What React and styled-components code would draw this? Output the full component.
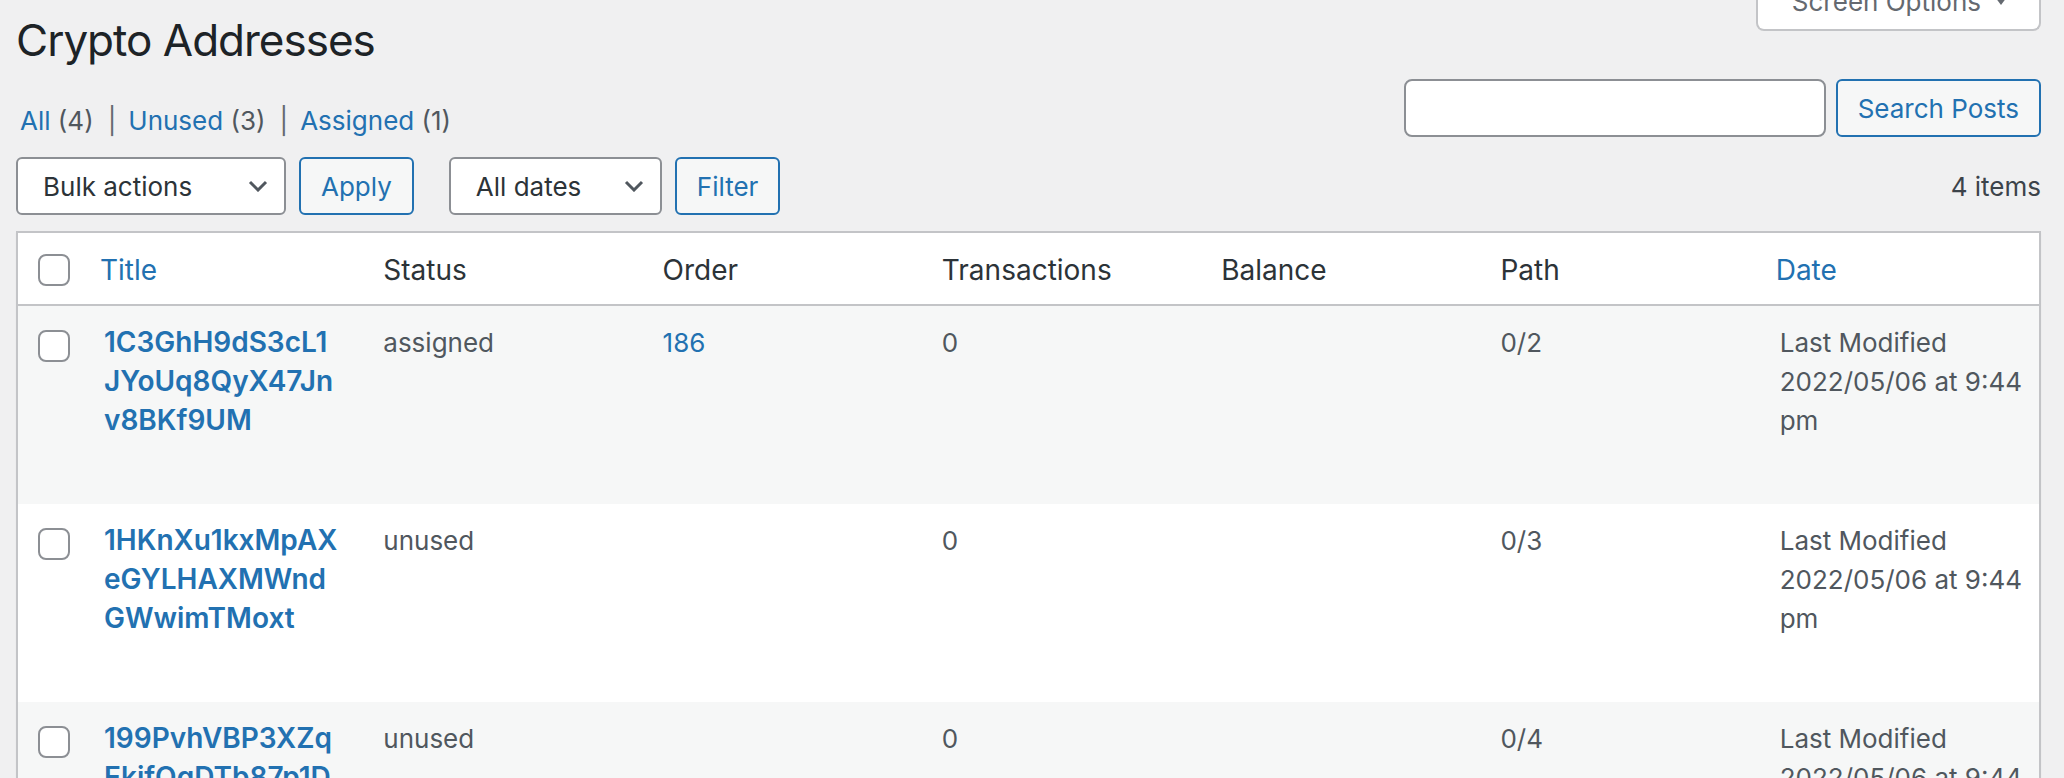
import React from "react";
import styled, { createGlobalStyle } from "styled-components";

const GlobalStyle = createGlobalStyle`
  body {
    margin: 0;
    background: #f0f0f1;
    font-family: Inter, "Noto Sans", "Liberation Sans", sans-serif;
    color: #3c434a;
  }
  * { box-sizing: border-box; }
`;

const Wrap = styled.div`
  padding: 0 23px 0 16px;
`;

const Header = styled.div`
  display: flex;
  justify-content: space-between;
  align-items: flex-start;
`;

const Heading = styled.h1`
  margin: 10px 0 0;
  font-size: 44px;
  line-height: 60px;
  letter-spacing: -1px;
  font-weight: 400;
  color: #1d2327;
`;

const ScreenOptions = styled.button`
  margin-top: -27px;
  height: 58px;
  display: flex;
  align-items: center;
  padding: 0 18px 0 34px;
  background: #fff;
  border: 2px solid #c3c4c7;
  border-top: none;
  border-radius: 0 0 8px 8px;
  color: #646970;
  font: inherit;
  font-size: 26px;
  .arrow {
    width: 40px;
    display: flex;
    justify-content: center;
  }
`;

const SubRow = styled.div`
  display: flex;
  justify-content: space-between;
  align-items: flex-start;
  margin-top: 9px;
`;

const Views = styled.ul`
  list-style: none;
  margin: 22px 0 0;
  padding: 0 0 0 4px;
  display: flex;
  font-size: 26px;
  line-height: 40px;
  color: #50575e;
  li { white-space: pre; }
  a { color: #2271b1; text-decoration: none; }
  .sep { color: #646970; margin: 0 12px 0 14px; }
`;

const SearchBox = styled.div`
  display: flex;
  gap: 10px;
`;

const SearchInput = styled.input`
  width: 422px;
  height: 58px;
  border: 2px solid #8c8f94;
  border-radius: 8px;
  background: #fff;
  font: inherit;
  font-size: 26px;
  padding: 0 16px;
`;

const Button = styled.button`
  height: 58px;
  padding: 0 20px;
  margin-left: ${p => p.$gap || 0}px;
  border: 2px solid #2271b1;
  border-radius: 6px;
  background: #f6f7f7;
  color: #2271b1;
  font: inherit;
  font-size: 26px;
  white-space: nowrap;
`;

const TableNav = styled.div`
  display: flex;
  align-items: center;
  height: 58px;
  margin-top: 16px;
`;

const Dropdown = styled.div`
  width: ${p => p.$width}px;
  height: 58px;
  margin-left: ${p => p.$gap || 0}px;
  display: flex;
  align-items: center;
  justify-content: space-between;
  padding: 0 16px 0 25px;
  background: #fff;
  border: 2px solid #8c8f94;
  border-radius: 6px;
  color: #2c3338;
  font-size: 26px;
`;

const Count = styled.div`
  margin-left: auto;
  font-size: 26px;
  color: #3c434a;
`;

const Table = styled.table`
  margin-top: 16px;
  width: 100%;
  table-layout: fixed;
  border-collapse: separate;
  border-spacing: 0;
  border: 2px solid #c3c4c7;
  background: #fff;
  box-shadow: 0 2px 2px rgba(0, 0, 0, 0.04);
`;

const Th = styled.th`
  height: 73px;
  padding: 2px ${p => (p.$sortable ? 16 : 20)}px 0;
  text-align: left;
  vertical-align: middle;
  font-size: 28px;
  font-weight: 400;
  color: ${p => (p.$sortable ? "#2271b1" : "#2c3338")};
  border-bottom: 2px solid #c3c4c7;
`;

const CheckTh = styled(Th)`
  padding: 2px 0 0 20px;
`;

const Row = styled.tr`
  height: 198px;
  background: ${p => (p.$alt ? "#f6f7f7" : "#fff")};
`;

const Td = styled.td`
  padding: 17px 20px;
  vertical-align: top;
  font-size: 26px;
  line-height: 39px;
  color: #50575e;
  a { color: #2271b1; text-decoration: none; }
`;

const CheckTd = styled.td`
  padding: 24px 0 0 20px;
  vertical-align: top;
`;

const Box = styled.span`
  display: block;
  width: 32px;
  height: 32px;
  border: 2px solid #8c8f94;
  border-radius: 8px;
  background: #fff;
`;

const RowTitle = styled.a`
  display: block;
  font-size: 28px;
  font-weight: 600;
  color: #2271b1;
  text-decoration: none;
  span { display: block; }
`;

const Lines = styled.div`
  span { display: block; white-space: nowrap; }
`;

const Chevron = () => (
  <svg width="20" height="12" viewBox="0 0 20 12">
    <polyline points="2,2 10,10 18,2" fill="none" stroke="#50575e" strokeWidth="3" />
  </svg>
);

const rows = [
  { title: ["1C3GhH9dS3cL1", "JYoUq8QyX47Jn", "v8BKf9UM"], status: "assigned", order: "186", tx: "0", path: "0/2" },
  { title: ["1HKnXu1kxMpAX", "eGYLHAXMWnd", "GWwimTMoxt"], status: "unused", order: "", tx: "0", path: "0/3" },
  { title: ["199PvhVBP3XZq", "EkifQgDTb87p1D", "vKpV5fN"], status: "unused", order: "", tx: "0", path: "0/4" },
];

export default function App() {
  return (
    <Wrap>
      <GlobalStyle />
      <Header>
        <Heading>Crypto Addresses</Heading>
        <ScreenOptions>
          Screen Options
          <span className="arrow">
            <svg width="12" height="8" viewBox="0 0 12 8">
              <polygon points="0,0 12,0 6,8" fill="#646970" />
            </svg>
          </span>
        </ScreenOptions>
      </Header>

      <SubRow>
        <Views>
          <li><a href="#">All</a> (4)<span className="sep">|</span></li>
          <li><a href="#">Unused</a> (3)<span className="sep">|</span></li>
          <li><a href="#">Assigned</a> (1)</li>
        </Views>
        <SearchBox>
          <SearchInput type="search" />
          <Button>Search Posts</Button>
        </SearchBox>
      </SubRow>

      <TableNav>
        <Dropdown $width={270}>Bulk actions<Chevron /></Dropdown>
        <Button $gap={13}>Apply</Button>
        <Dropdown $width={213} $gap={35}>All dates<Chevron /></Dropdown>
        <Button $gap={13}>Filter</Button>
        <Count>4 items</Count>
      </TableNav>

      <Table>
        <colgroup>
          <col style={{ width: 66 }} />
          <col /><col /><col /><col /><col /><col /><col />
        </colgroup>
        <thead>
          <tr>
            <CheckTh><Box /></CheckTh>
            <Th $sortable>Title</Th>
            <Th>Status</Th>
            <Th>Order</Th>
            <Th>Transactions</Th>
            <Th>Balance</Th>
            <Th>Path</Th>
            <Th $sortable>Date</Th>
          </tr>
        </thead>
        <tbody>
          {rows.map((r, i) => (
            <Row key={r.path} $alt={i % 2 === 0}>
              <CheckTd><Box /></CheckTd>
              <Td>
                <RowTitle href="#">
                  {r.title.map(t => <span key={t}>{t}</span>)}
                </RowTitle>
              </Td>
              <Td>{r.status}</Td>
              <Td>{r.order && <a href="#">{r.order}</a>}</Td>
              <Td>{r.tx}</Td>
              <Td></Td>
              <Td>{r.path}</Td>
              <Td>
                <Lines>
                  <span>Last Modified</span>
                  <span>2022/05/06 at 9:44</span>
                  <span>pm</span>
                </Lines>
              </Td>
            </Row>
          ))}
        </tbody>
      </Table>
    </Wrap>
  );
}
